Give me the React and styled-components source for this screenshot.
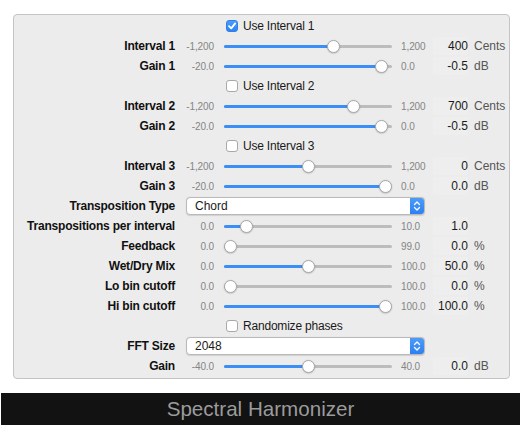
import React from "react";
import styled, { createGlobalStyle } from "styled-components";

const rows = [
  { type: "check", label: "Use Interval 1", checked: true },
  { type: "slider", label: "Interval 1", min: "-1,200", max: "1,200", value: "400", unit: "Cents", frac: 0.667 },
  { type: "slider", label: "Gain 1", min: "-20.0", max: "0.0", value: "-0.5", unit: "dB", frac: 0.975 },
  { type: "check", label: "Use Interval 2", checked: false },
  { type: "slider", label: "Interval 2", min: "-1,200", max: "1,200", value: "700", unit: "Cents", frac: 0.792 },
  { type: "slider", label: "Gain 2", min: "-20.0", max: "0.0", value: "-0.5", unit: "dB", frac: 0.975 },
  { type: "check", label: "Use Interval 3", checked: false },
  { type: "slider", label: "Interval 3", min: "-1,200", max: "1,200", value: "0", unit: "Cents", frac: 0.5 },
  { type: "slider", label: "Gain 3", min: "-20.0", max: "0.0", value: "0.0", unit: "dB", frac: 1 },
  { type: "select", label: "Transposition Type", value: "Chord" },
  { type: "slider", label: "Transpositions per interval", min: "0.0", max: "10.0", value: "1.0", unit: "", frac: 0.1 },
  { type: "slider", label: "Feedback", min: "0.0", max: "99.0", value: "0.0", unit: "%", frac: 0 },
  { type: "slider", label: "Wet/Dry Mix", min: "0.0", max: "100.0", value: "50.0", unit: "%", frac: 0.5 },
  { type: "slider", label: "Lo bin cutoff", min: "0.0", max: "100.0", value: "0.0", unit: "%", frac: 0 },
  { type: "slider", label: "Hi bin cutoff", min: "0.0", max: "100.0", value: "100.0", unit: "%", frac: 1 },
  { type: "check", label: "Randomize phases", checked: false },
  { type: "select", label: "FFT Size", value: "2048" },
  { type: "slider", label: "Gain", min: "-40.0", max: "40.0", value: "0.0", unit: "dB", frac: 0.5 },
];

function Slider({ frac }) {
  const center = 6.5 + frac * 155;
  return (
    <Track>
      <Fill style={{ width: center }} />
      <Thumb style={{ left: center - 6.5 }} />
    </Track>
  );
}

function Check({ checked, label }) {
  return (
    <CheckCell>
      <Box checked={checked}>
        {checked && (
          <svg width="10" height="10" viewBox="0 0 10 10">
            <path d="M2 5.2 L4.2 7.4 L8.2 2.4" fill="none" stroke="#fff" strokeWidth="1.8" strokeLinecap="round" strokeLinejoin="round" />
          </svg>
        )}
      </Box>
      <CheckText>{label}</CheckText>
    </CheckCell>
  );
}

function Select({ value }) {
  return (
    <SelectBox>
      <SelectText>{value}</SelectText>
      <Stepper>
        <svg width="8" height="12" viewBox="0 0 8 12">
          <path d="M1.5 4.5 L4 2 L6.5 4.5 M1.5 7.5 L4 10 L6.5 7.5" fill="none" stroke="#fff" strokeWidth="1.3" strokeLinecap="round" strokeLinejoin="round" />
        </svg>
      </Stepper>
    </SelectBox>
  );
}

export default function App() {
  return (
    <>
      <GlobalStyle />
      <Panel>
        {rows.map((r, i) => {
          if (r.type === "check") {
            return <Row key={i}><Check checked={r.checked} label={r.label} /></Row>;
          }
          if (r.type === "select") {
            return (
              <Row key={i}>
                <Label>{r.label}</Label>
                <Select value={r.value} />
              </Row>
            );
          }
          return (
            <Row key={i}>
              <Label>{r.label}</Label>
              <MinText>{r.min}</MinText>
              <Slider frac={r.frac} />
              <MaxText>{r.max}</MaxText>
              <Value>{r.value}</Value>
              <Unit>{r.unit}</Unit>
            </Row>
          );
        })}
      </Panel>
      <TitleBar>Spectral Harmonizer</TitleBar>
    </>
  );
}

const GlobalStyle = createGlobalStyle`
  * { margin: 0; padding: 0; box-sizing: border-box; }
  body {
    background: #ffffff;
    font-family: "Liberation Sans", Arial, sans-serif;
    padding-top: 14px;
  }
`;

const Panel = styled.div`
  margin-left: 13px;
  width: 497px;
  background: #ececec;
  border: 1px solid #c4c4c4;
  border-radius: 4px;
  padding: 1px 0 2px;
  display: grid;
  grid-template-columns: 172px 38px 168px 41px 35px 1fr;
  grid-auto-rows: 20px;
`;

const Row = styled.div`
  display: contents;
`;

const Label = styled.div`
  grid-column: 1;
  align-self: center;
  text-align: right;
  padding-right: 11px;
  font-size: 12px;
  font-weight: bold;
  letter-spacing: -0.2px;
  color: #111;
  white-space: nowrap;
`;

const MinText = styled.div`
  grid-column: 2;
  align-self: center;
  text-align: right;
  padding-right: 10px;
  font-size: 10px;
  letter-spacing: -0.1px;
  color: #858585;
`;

const MaxText = styled.div`
  grid-column: 4;
  align-self: center;
  padding-left: 9px;
  font-size: 10px;
  letter-spacing: -0.1px;
  color: #858585;
`;

const Value = styled.div`
  grid-column: 5;
  align-self: center;
  height: 18px;
  line-height: 18px;
  text-align: right;
  font-size: 12px;
  color: #1a1a1a;
  background: rgba(255, 255, 255, 0.1);
`;

const Unit = styled.div`
  grid-column: 6;
  align-self: center;
  padding-left: 6px;
  font-size: 12px;
  color: #555;
`;

const Track = styled.div`
  grid-column: 3;
  align-self: center;
  position: relative;
  height: 3px;
  border-radius: 1.5px;
  background: #bcbcbc;
`;

const Fill = styled.div`
  height: 3px;
  border-radius: 1.5px;
  background: #3b8ef6;
`;

const Thumb = styled.div`
  position: absolute;
  top: -5px;
  width: 13px;
  height: 13px;
  border-radius: 50%;
  background: #ffffff;
  border: 0.5px solid #a9a9a9;
  box-shadow: 0 0.5px 1.5px rgba(0, 0, 0, 0.25);
`;

const CheckCell = styled.div`
  grid-column: 3 / 7;
  display: flex;
  align-items: center;
  gap: 5px;
  padding-left: 2px;
`;

const Box = styled.div`
  width: 12px;
  height: 12px;
  border-radius: 3px;
  display: flex;
  align-items: center;
  justify-content: center;
  background: ${({ checked }) => (checked ? "linear-gradient(#4c9bf8, #2f84f4)" : "#ffffff")};
  border: 1px solid ${({ checked }) => (checked ? "#2f7fe6" : "#a8a8a8")};
`;

const CheckText = styled.span`
  font-size: 12px;
  letter-spacing: -0.2px;
  color: #1a1a1a;
`;

const SelectBox = styled.div`
  grid-column: 2 / 6;
  align-self: center;
  width: 239px;
  height: 18px;
  display: flex;
  align-items: stretch;
  background: #ffffff;
  border: 0.5px solid #b9b9b9;
  border-radius: 4px;
  box-shadow: 0 0.5px 1px rgba(0, 0, 0, 0.12);
  overflow: hidden;
`;

const SelectText = styled.div`
  flex: 1;
  padding-left: 8px;
  line-height: 17px;
  font-size: 12px;
  color: #1a1a1a;
`;

const Stepper = styled.div`
  width: 14px;
  display: flex;
  align-items: center;
  justify-content: center;
  background: linear-gradient(#4d9cf8, #2c80f2);
`;

const TitleBar = styled.div`
  margin: 14px 0 0 1px;
  height: 32px;
  background: #121212;
  color: #9b9b9b;
  font-size: 20.6px;
  line-height: 32px;
  text-align: center;
`;
